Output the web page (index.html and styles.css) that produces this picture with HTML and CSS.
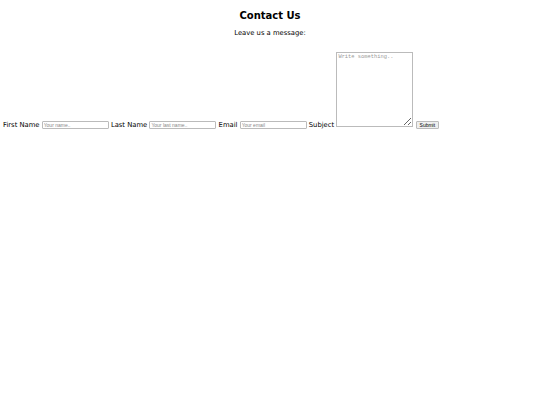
FILE: index.html
```html
<!DOCTYPE html>
<html>
<head>
<meta charset="utf-8">
<link rel="stylesheet" href="styles.css">
</head>
<body>
<h2 class="title">Contact Us</h2>
<p class="intro">Leave us a message:</p>
<form class="contact-form">
<label class="lbl" for="fname">First Name</label>
<input class="field" type="text" id="fname" placeholder="Your name..">
<label class="lbl" for="lname">Last Name</label>
<input class="field" type="text" id="lname" placeholder="Your last name..">
<label class="lbl" for="email">Email</label>
<input class="field" type="text" id="email" placeholder="Your email">
<label class="lbl" for="subject">Subject</label>
<textarea class="msg" id="subject" placeholder="Write something.."></textarea>
<input class="submit" type="submit" value="Submit">
</form>
</body>
</html>
```
FILE: styles.css
```css
html, body {
  background: #fff;
}
body {
  margin: 3px;
  font-family: "DejaVu Sans", sans-serif;
  font-size: 6.8px;
  color: #000;
}
.title {
  text-align: center;
  font-size: 10px;
  font-weight: bold;
  margin: 7px 0 0 0;
  line-height: 12px;
}
.intro {
  text-align: center;
  margin: 7px 0 0 0;
  line-height: 8px;
}
.contact-form {
  margin-top: 15px;
}
.lbl {
  font-size: 6.8px;
}
.field {
  width: 63px;
  height: 6px;
  padding: 0 1px;
  margin: 0;
  font-family: "Liberation Sans", Arial, sans-serif;
  font-size: 5px;
  border: 1px solid #bbb;
  border-radius: 1px;
  box-sizing: content-box;
}
.field::placeholder {
  color: #888;
}
.msg {
  width: 77px;
  height: 75px;
  padding: 1px;
  margin: 0;
  border: 1px solid #bbb;
  font-family: "Liberation Mono", monospace;
  font-size: 5.4px;
  box-sizing: border-box;
  resize: both;
}
.msg::placeholder {
  color: #999;
}
.submit {
  font-family: "Liberation Sans", Arial, sans-serif;
  font-size: 5px;
  height: 8px;
  line-height: 6px;
  padding: 0 3px;
  margin: 0;
  border: 1px solid #bbb;
  background: #efefef;
  border-radius: 1px;
}
```
